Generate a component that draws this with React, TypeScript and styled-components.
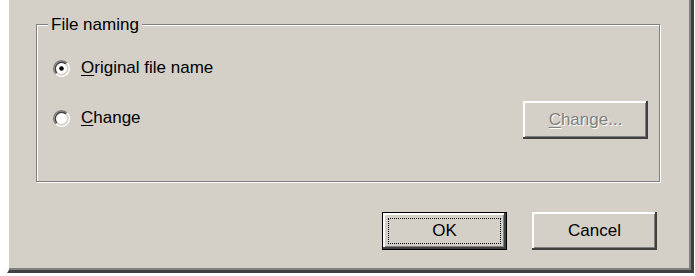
import React from "react";
import styled, { createGlobalStyle } from "styled-components";

const FACE = "#d4d0c8";
const SHADOW = "#808080";
const DARK = "#404040";

const GlobalStyle = createGlobalStyle`
  html, body {
    margin: 0;
    padding: 0;
    background: #ffffff;
  }
  body {
    font-family: "Liberation Sans", Arial, sans-serif;
    font-size: 17px;
    color: #000;
  }
`;

const Dialog = styled.div`
  box-sizing: border-box;
  margin-left: 7px;
  width: 687px;
  height: 273px;
  background: ${FACE};
  border-left: 2px solid #ffffff;
  border-right: 3px solid ${DARK};
  border-bottom: 3px solid ${DARK};
  box-shadow: inset -2px -2px 0 ${SHADOW};
  padding: 14px 31px 0 27px;
  display: flex;
  flex-direction: column;
`;

const Group = styled.fieldset`
  margin: 0;
  padding: 12px 11px 0 16px;
  height: 168px;
  box-sizing: border-box;
  border: 1px solid ${SHADOW};
  box-shadow: inset 1px 1px 0 #ffffff, 1px 1px 0 #ffffff;
  display: flex;
  flex-direction: column;
  gap: 12px;
`;

const Legend = styled.legend`
  padding: 1px 3px 0;
  margin-left: -5px;
  line-height: 20px;
  background: ${FACE};
`;

const Row = styled.div<{ $height: number }>`
  display: flex;
  align-items: center;
  justify-content: space-between;
  height: ${(p) => p.$height}px;
`;

const Option = styled.label<{ $lift?: number }>`
  display: flex;
  align-items: center;
  gap: 11px;
  cursor: default;
  line-height: 20px;
  margin-bottom: ${(p) => (p.$lift ?? 0) * 2}px;
`;

const Key = styled.span`
  text-decoration: underline;
  text-underline-offset: 2px;
`;

const Footer = styled.div`
  display: flex;
  justify-content: flex-end;
  gap: 25px;
  margin-top: 30px;
  padding-right: 3px;
`;

const Button = styled.button<{ $default?: boolean }>`
  width: 125px;
  height: 38px;
  background: ${FACE};
  font-family: "Liberation Sans", Arial, sans-serif;
  font-size: 17px;
  color: ${(p) => (p.disabled ? SHADOW : "#000")};
  text-shadow: ${(p) => (p.disabled ? "1px 1px 0 #ffffff" : "none")};
  border: ${(p) => (p.$default ? "1px solid #000" : "none")};
  box-shadow: inset -2px -2px 0 ${DARK}, inset 2px 2px 0 #ffffff,
    inset -3px -3px 0 ${SHADOW};
  outline: ${(p) => (p.$default ? "1px dotted #000" : "none")};
  outline-offset: -7px;
  padding: 0;
  margin: 0;
`;

const RadioIcon: React.FC<{ checked?: boolean }> = ({ checked }) => (
  <svg width="17" height="17" viewBox="0 0 12 12">
    <circle cx="6" cy="6" r="4.3" fill="#fff" />
    <path d="M2.11 9.89 A5.5 5.5 0 0 1 9.89 2.11" fill="none" stroke={SHADOW} strokeWidth="1" />
    <path d="M2.82 9.18 A4.5 4.5 0 0 1 9.18 2.82" fill="none" stroke={DARK} strokeWidth="1" />
    <path d="M9.89 2.11 A5.5 5.5 0 0 1 2.11 9.89" fill="none" stroke="#fff" strokeWidth="1" />
    <path d="M9.18 2.82 A4.5 4.5 0 0 1 2.82 9.18" fill="none" stroke={FACE} strokeWidth="1" />
    {checked && <circle cx="6" cy="6" r="1.6" fill="#000" />}
  </svg>
);

export default function App() {
  return (
    <>
      <GlobalStyle />
      <Dialog>
        <Group>
          <Legend>File naming</Legend>
          <Row $height={42}>
            <Option>
              <RadioIcon checked />
              <span>
                <Key>O</Key>riginal file name
              </span>
            </Option>
          </Row>
          <Row $height={38}>
            <Option $lift={2}>
              <RadioIcon />
              <span>
                <Key>C</Key>hange
              </span>
            </Option>
            <Button disabled>
              <Key>C</Key>hange...
            </Button>
          </Row>
        </Group>
        <Footer>
          <Button $default>OK</Button>
          <Button>Cancel</Button>
        </Footer>
      </Dialog>
    </>
  );
}
